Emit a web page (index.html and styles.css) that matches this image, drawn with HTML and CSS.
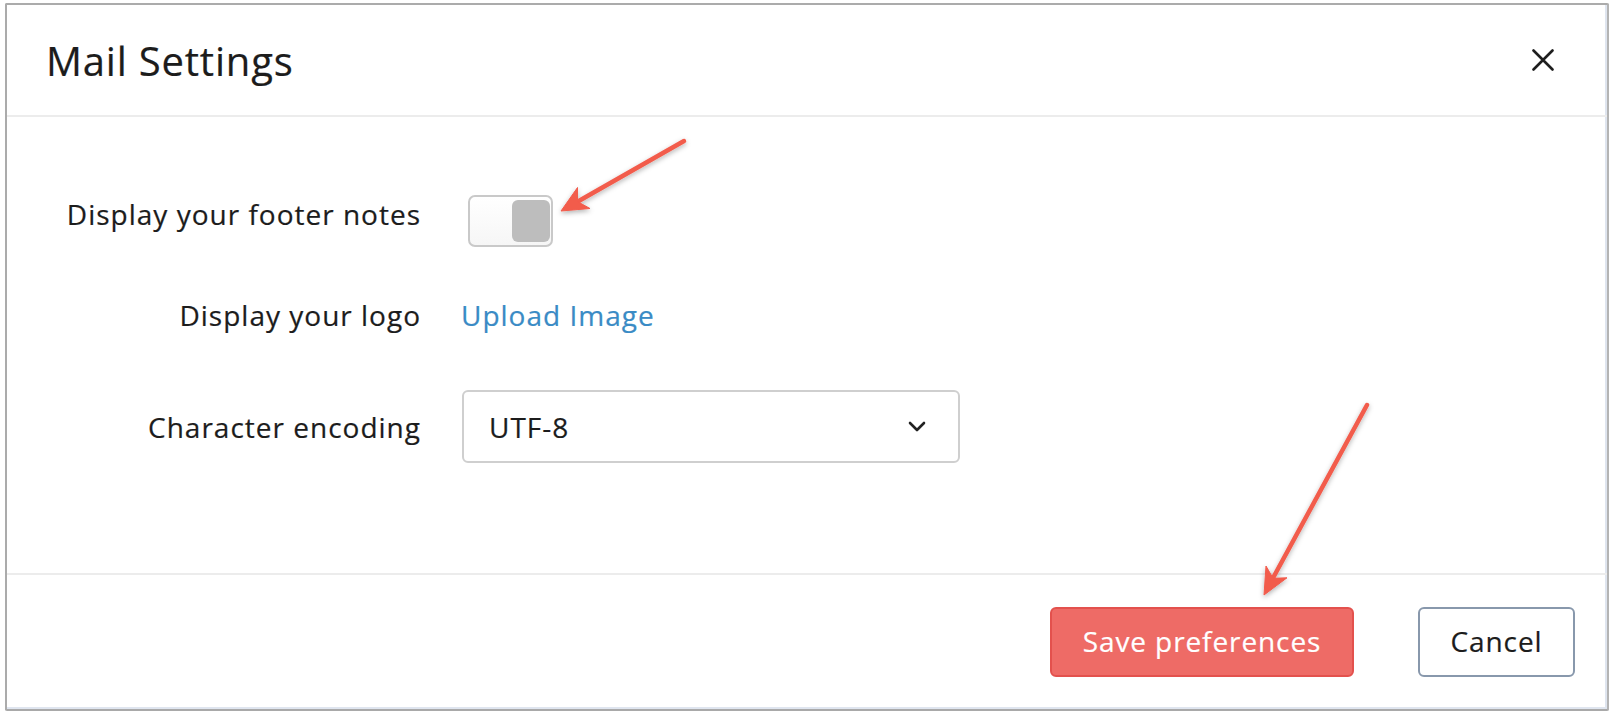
FILE: index.html
```html
<!DOCTYPE html>
<html lang="en">
<head>
<meta charset="utf-8">
<title>Mail Settings</title>
<link rel="stylesheet" href="styles.css">
</head>
<body>
<div class="dialog">
  <header class="dlg-header">
    <h1 class="dlg-title">Mail Settings</h1>
    <button class="close-btn" aria-label="Close">
      <svg width="22" height="22" viewBox="0 0 22 22"><path d="M1.5 1.5 L20.5 20.5 M20.5 1.5 L1.5 20.5" stroke="#1e1e1e" stroke-width="2.6" stroke-linecap="round" fill="none"/></svg>
    </button>
  </header>
  <section class="dlg-body">
    <div class="row row-1">
      <div class="label">Display your footer notes</div>
      <div class="control"><span class="toggle"><span class="knob"></span></span></div>
    </div>
    <div class="row row-2">
      <div class="label">Display your logo</div>
      <div class="control"><a class="link" href="#">Upload Image</a></div>
    </div>
    <div class="row row-3">
      <div class="label">Character encoding</div>
      <div class="control">
        <div class="select"><span>UTF-8</span>
          <svg width="18" height="11" viewBox="0 0 18 11"><path d="M2 2 L9 9 L16 2" stroke="#222" stroke-width="2.6" fill="none" stroke-linecap="round" stroke-linejoin="round"/></svg>
        </div>
      </div>
    </div>
  </section>
  <footer class="dlg-footer">
    <button class="btn btn-save">Save preferences</button>
    <button class="btn btn-cancel">Cancel</button>
  </footer>
</div>
<svg class="arrows" width="1614" height="714" viewBox="0 0 1614 714">
  <defs>
    <filter id="sh" x="-20%" y="-20%" width="140%" height="140%">
      <feDropShadow dx="0" dy="2" stdDeviation="2.5" flood-color="#000" flood-opacity="0.3"/>
    </filter>
  </defs>
  <g filter="url(#sh)" fill="#f25b4c" stroke="#f25b4c">
    <line x1="577" y1="202" x2="684" y2="141" stroke-width="4.5" stroke-linecap="round"/>
    <polygon points="561,211 590,208.5 577.5,201.6 577.5,187.5" stroke-width="1" stroke-linejoin="round"/>
    <line x1="1273" y1="578" x2="1367" y2="405" stroke-width="4.5" stroke-linecap="round"/>
    <polygon points="1264,595 1287,577.8 1273.1,578.3 1266,566" stroke-width="1" stroke-linejoin="round"/>
  </g>
</svg>
</body>
</html>
```
FILE: styles.css
```css
* { box-sizing: border-box; }
html, body { margin: 0; padding: 0; background: #ffffff; }
body {
  font-family: "Open Sans", "Noto Sans", "DejaVu Sans", sans-serif;
  color: #1c1c1c;
  width: 1614px;
  height: 714px;
  overflow: hidden;
  position: relative;
}
.dialog {
  margin: 3px 0 0 5px;
  width: 1604px;
  height: 708px;
  border: 2px solid #ababab;
  border-right-color: #b4b4b4;
  border-bottom-color: #a9a9a9;
  box-shadow: inset -2px -2px 0 #dfe5ef;
  border-radius: 2px;
  display: flex;
  flex-direction: column;
  background: #fff;
}
.dlg-header {
  height: 112px;
  display: flex;
  align-items: center;
  justify-content: space-between;
  padding: 0 52px 0 39px;
  border-bottom: 2px solid #ececec;
}
.dlg-title {
  margin: 0;
  font-weight: 400;
  font-size: 40px;
  color: #1c1c1c;
  letter-spacing: 0.8px;
  -webkit-text-stroke: 0.2px #1c1c1c;
}
.close-btn {
  border: 0;
  background: none;
  padding: 0;
  width: 24px;
  height: 24px;
  display: flex;
  align-items: center;
  justify-content: center;
}
.dlg-body {
  padding: 78px 0 0 0;
  flex: 1;
  border-bottom: 2px solid #ececec;
}
.row {
  display: grid;
  grid-template-columns: 413px 1fr;
  column-gap: 43px;
  align-items: center;
}
.row-1 { height: 52px; }
.row-2 { height: 52px; margin-top: 42px; }
.row-3 { height: 72px; margin-top: 49px; }
.label {
  text-align: right;
  font-size: 28px;
  letter-spacing: 1px;
  color: #1c1c1c;
  margin-right: -1px;
  -webkit-text-stroke: 0.2px #1c1c1c;
}
.row-1 .label { margin-top: -14px; }
.control { display: flex; align-items: center; }
.toggle {
  margin-left: 5px;
  width: 85px;
  height: 52px;
  border: 2px solid #c9c9c9;
  border-radius: 7px;
  background: linear-gradient(#ffffff, #f6f6f6);
  display: flex;
  justify-content: flex-end;
  align-items: center;
  padding-right: 1px;
}
.knob {
  width: 38px;
  height: 42px;
  background: #bdbdbd;
  border-radius: 6px;
}
.link {
  margin-left: -2px;
  color: #3a8bc5;
  text-decoration: none;
  font-size: 28px;
  letter-spacing: 1px;
  -webkit-text-stroke: 0.2px #3a8bc5;
}
.select {
  margin-left: -1px;
  width: 498px;
  height: 73px;
  border: 2px solid #cfcfcf;
  border-radius: 6px;
  display: flex;
  align-items: center;
  justify-content: space-between;
  padding: 0 32px 0 25px;
  font-size: 28px;
  letter-spacing: 1px;
  color: #1c1c1c;
  -webkit-text-stroke: 0.2px #1c1c1c;
}
.dlg-footer {
  height: 134px;
  display: flex;
  justify-content: flex-end;
  align-items: center;
  gap: 64px;
  padding-right: 32px;
}
.btn {
  font-family: inherit;
  font-size: 28px;
  letter-spacing: 0.9px;
  height: 70px;
  border-radius: 6px;
  cursor: pointer;
  padding-bottom: 3px;
}
.btn-save {
  width: 304px;
  background: #ee6b66;
  border: 2px solid #e3514d;
  color: #fff;
  -webkit-text-stroke: 0.2px #fff;
}
.btn-cancel {
  width: 157px;
  background: #fff;
  border: 2px solid #8898ac;
  color: #1c1c1c;
  -webkit-text-stroke: 0.2px #1c1c1c;
}
.arrows {
  position: absolute;
  left: 0;
  top: 0;
  pointer-events: none;
}
```
